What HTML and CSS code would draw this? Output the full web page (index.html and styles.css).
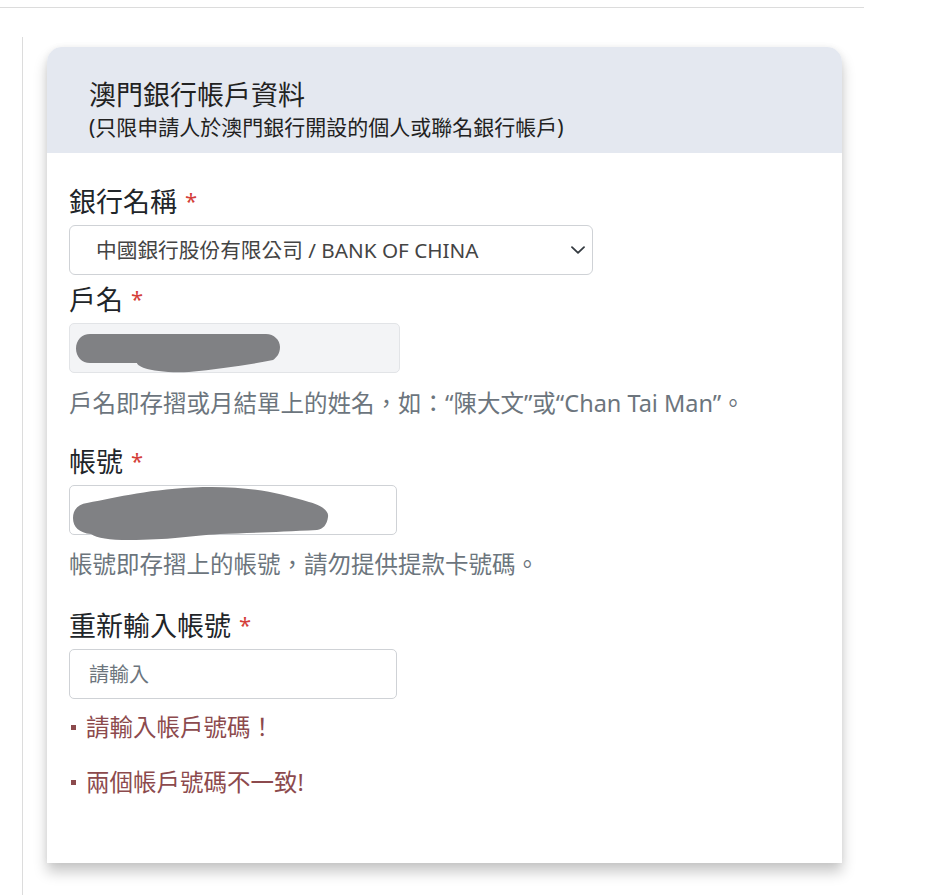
FILE: index.html
```html
<!DOCTYPE html>
<html lang="zh-Hant">
<head>
<meta charset="utf-8">
<title>澳門銀行帳戶資料</title>
<link rel="stylesheet" href="styles.css">
</head>
<body>
<div class="topbar"></div>
<div class="page">
  <div class="card">
    <div class="card-header">
      <div class="card-title">澳門銀行帳戶資料</div>
      <div class="card-subtitle">(只限申請人於澳門銀行開設的個人或聯名銀行帳戶)</div>
    </div>
    <div class="card-body">
      <div class="group">
        <div class="label">銀行名稱<span class="req">*</span></div>
        <div class="select">
          <span class="select-text">中國銀行股份有限公司 / BANK OF CHINA</span>
          <svg class="chevron" width="14" height="8" viewBox="0 0 14 8"><path d="M1 1.2l6 5.6 6-5.6" fill="none" stroke="#343a40" stroke-width="1.8" stroke-linecap="round" stroke-linejoin="round"/></svg>
        </div>
      </div>
      <div class="group g-name">
        <div class="label">戶名<span class="req">*</span></div>
        <div class="field">
          <div class="input input-disabled input-name"></div>
          <svg class="redact" width="331" height="60" viewBox="0 0 331 60"><path d="M21 11 L197 11 C205 11 211 17 211 24 C211 31 207 35 204 37 C180 42 150 46 120 49 C100 50 85 48 75 45 C70 43 68 41 68 40 L21 40 C13 40 7 34 7 25.5 C7 17 13 11 21 11 Z" fill="#808184"/></svg>
        </div>
        <div class="help">戶名即存摺或月結單上的姓名，如：“陳大文”或“Chan Tai Man”。</div>
      </div>
      <div class="group g-acct">
        <div class="label">帳號<span class="req">*</span></div>
        <div class="field">
          <div class="input input-acct"></div>
          <svg class="redact" width="331" height="60" viewBox="0 0 331 60"><path d="M18 18 C50 12 80 4 134 2 C180 1 210 8 240 17 C255 21 260 27 259 32 C258 40 254 44 248 45 C210 47 180 48 151 49 C120 51 100 55 60 55 C40 55 28 53 22 49 C10 48 4 42 4 33 C4 24 10 19 18 18 Z" fill="#808184"/></svg>
        </div>
        <div class="help">帳號即存摺上的帳號，請勿提供提款卡號碼。</div>
      </div>
      <div class="group g-re">
        <div class="label">重新輸入帳號<span class="req">*</span></div>
        <input class="input input-acct text-input" type="text" placeholder="請輸入">
        <div class="error e1">請輸入帳戶號碼！</div>
        <div class="error e2">兩個帳戶號碼不一致!</div>
      </div>
    </div>
  </div>
</div>
</body>
</html>
```

FILE: styles.css
```css
html, body {
  margin: 0;
  padding: 0;
  background: #fff;
}
body {
  font-family: "Noto Sans", "Noto Sans CJK TC", sans-serif;
  color: #212529;
}
.topbar {
  width: 864px;
  height: 7px;
  border-bottom: 1px solid #dcdcdc;
}
.page {
  margin-top: 29px;
  margin-left: 22px;
  border-left: 1px solid #dcdcdc;
  padding: 10px 0 40px 24px;
  min-height: 820px;
  box-sizing: border-box;
}
.card {
  width: 795px;
  background: #fff;
  border-radius: 15px 15px 0 0;
  box-shadow: 0 9px 14px rgba(0, 0, 0, 0.22), 0 0 6px rgba(0, 0, 0, 0.05);
}
.card-header {
  background: #e4e8f0;
  border-radius: 15px 15px 0 0;
  padding: 31px 42px 10px;
}
.card-title {
  font-size: 27px;
  line-height: 34px;
  color: #222;
}
.card-subtitle {
  font-size: 21px;
  line-height: 31px;
  color: #222;
}
.card-body {
  padding: 29px 22px 65px;
}
.label {
  font-size: 27px;
  line-height: 36px;
  color: #212529;
  margin-bottom: 5px;
}
.req {
  color: #d43f3a;
  font-size: 22px;
  margin-left: 8px;
  vertical-align: 3px;
}
.select {
  width: 524px;
  height: 50px;
  box-sizing: border-box;
  border: 1px solid #cfd2d6;
  border-radius: 6px;
  display: flex;
  align-items: center;
  justify-content: space-between;
  padding: 0 7px 0 26px;
}
.select-text {
  font-size: 20.7px;
  color: #444;
  line-height: 28px;
}
.group + .group {
  margin-top: 5px;
}
.g-acct {
  margin-top: 23px !important;
}
.g-re {
  margin-top: 26px !important;
}
.field {
  position: relative;
  height: 50px;
}
.input {
  height: 50px;
  box-sizing: border-box;
  border: 1px solid #cfd2d6;
  border-radius: 5px;
  background: #fff;
}
.input-name {
  width: 331px;
}
.input-disabled {
  background: #f3f4f6;
  border-color: #e2e4e7;
}
.input-acct {
  width: 328px;
}
.redact {
  position: absolute;
  left: 0;
  top: 0;
  overflow: visible;
  pointer-events: none;
}
.help {
  margin-top: 14px;
  font-size: 23.5px;
  line-height: 32px;
  color: #6c757d;
}
.g-acct .help {
  margin-top: 13px;
}
.text-input {
  display: block;
  margin: 0;
  padding: 0 19px;
  font-family: "Noto Sans", "Noto Sans CJK TC", sans-serif;
  font-size: 20px;
  color: #444;
  outline: none;
}
.text-input::placeholder {
  color: #6c757d;
}
.error {
  display: flex;
  align-items: center;
  font-size: 23.5px;
  line-height: 32px;
  color: #8c4a4d;
}
.error::before {
  content: "";
  width: 5px;
  height: 5px;
  background: #8c4a4d;
  margin: 0 10px 0 2px;
}
.e1 {
  margin-top: 12px;
}
.e2 {
  margin-top: 23px;
}
```
